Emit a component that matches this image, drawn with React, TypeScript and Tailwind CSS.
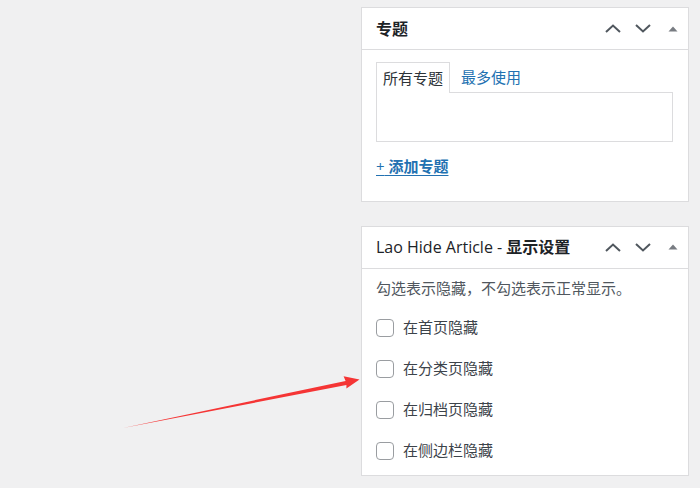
const font = "font-['Open_Sans','Noto_Sans_CJK_SC',sans-serif]"

function HeaderIcons() {
  return (
    <div className="flex items-center">
      <span className="flex h-[30px] w-[30px] items-center justify-center">
        <svg width="16" height="9" viewBox="0 0 16 9" fill="none">
          <path d="M1 8 L8 1.5 L15 8" stroke="#50575e" strokeWidth="2" />
        </svg>
      </span>
      <span className="flex h-[30px] w-[30px] items-center justify-center">
        <svg width="16" height="9" viewBox="0 0 16 9" fill="none">
          <path d="M1 1 L8 7.5 L15 1" stroke="#50575e" strokeWidth="2" />
        </svg>
      </span>
      <span className="flex h-[30px] w-[30px] items-center justify-center">
        <svg width="10" height="6" viewBox="0 0 10 6">
          <path d="M0.5 5.5 L5 0.5 L9.5 5.5 Z" fill="#787c82" />
        </svg>
      </span>
    </div>
  )
}

function Checkbox({ label }: { label: string }) {
  return (
    <label className="flex h-[41px] items-center gap-[9px]">
      <span className="h-[18px] w-[18px] rounded-[4px] border border-[#9a9da1] bg-white" />
      <span className="text-[15px] text-[#3c434a]">{label}</span>
    </label>
  )
}

export default function App() {
  return (
    <div className={`relative h-[488px] overflow-hidden bg-[#f0f0f1] ${font}`}>
      <div className="ml-[361px] flex w-[328px] flex-col pt-[7px]">
        <div className="border border-[#dcdcde] bg-white">
          <div className="flex h-[42px] items-center justify-between border-b border-[#dcdcde] pl-[14px]">
            <h2 className="text-[16px] font-bold text-[#1d2327]">专题</h2>
            <HeaderIcons />
          </div>
          <div className="px-[14px] pt-[12px] pb-[23px]">
            <div className="flex">
              <div className="relative -mb-px z-10 flex h-[31px] items-center border border-b-0 border-[#dcdcde] bg-white px-[6px] text-[15px] text-[#2c3338]">
                所有专题
              </div>
              <div className="flex h-[30px] items-center px-[11px] text-[15px] text-[#2271b1]">最多使用</div>
            </div>
            <div className="h-[50px] w-[297px] border border-[#dcdcde] bg-white" />
            <div className="mt-[13px] text-[15px] font-bold text-[#2271b1] underline underline-offset-[3px]">
              <span className="font-normal">+</span> 添加专题
            </div>
          </div>
        </div>

        <div className="mt-[24px] border border-[#dcdcde] bg-white">
          <div className="flex h-[42px] items-center justify-between border-b border-[#dcdcde] pl-[14px]">
            <h2 className="text-[16px] text-[#1d2327]">
              Lao Hide Article -&nbsp;<span className="font-bold">显示设置</span>
            </h2>
            <HeaderIcons />
          </div>
          <div className="px-[14px] pt-[8px] pb-[4px]">
            <p className="text-[15px] text-[#50575e]">勾选表示隐藏，不勾选表示正常显示。</p>
            <div className="mt-[8px] flex flex-col">
              <Checkbox label="在首页隐藏" />
              <Checkbox label="在分类页隐藏" />
              <Checkbox label="在归档页隐藏" />
              <Checkbox label="在侧边栏隐藏" />
            </div>
          </div>
        </div>
      </div>

      <svg className="absolute left-0 top-0" width="700" height="488" viewBox="0 0 700 488">
        <polygon
          points="123,428 345.6,381 343.6,376.2 359.5,379.6 346.4,388.6 346.4,385"
          fill="#f53535"
        />
      </svg>
    </div>
  )
}
